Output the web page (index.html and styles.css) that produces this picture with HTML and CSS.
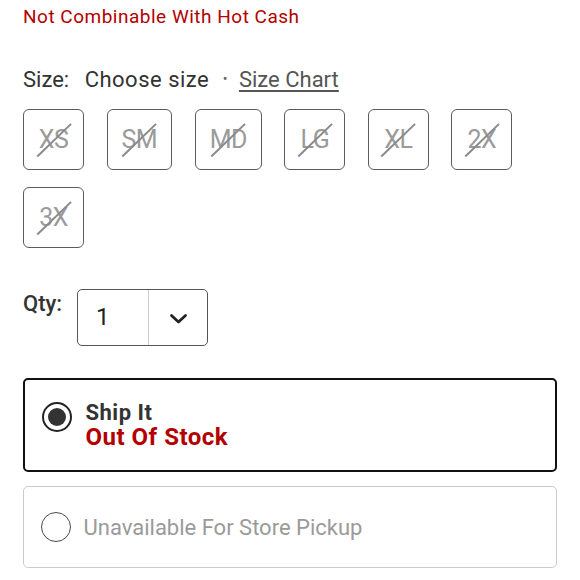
FILE: index.html
```html
<!DOCTYPE html>
<html lang="en">
<head>
  <meta charset="UTF-8">
  <meta name="viewport" content="width=device-width, initial-scale=1.0">
  <title>Product Options</title>
  <link rel="stylesheet" href="styles.css">
</head>
<body>
  <div class="page">
    <p class="promo-note">Not Combinable With Hot Cash</p>

    <div class="size-header">
      <span class="label">Size:</span>
      <span class="size-value">Choose size</span>
      <span class="dot">&bull;</span>
      <a class="size-chart" href="#">Size Chart</a>
    </div>

    <div class="size-grid">
      <button class="size-btn">XS</button>
      <button class="size-btn">SM</button>
      <button class="size-btn">MD</button>
      <button class="size-btn">LG</button>
      <button class="size-btn">XL</button>
      <button class="size-btn">2X</button>
      <button class="size-btn">3X</button>
    </div>

    <div class="qty-row">
      <span class="qty-label">Qty:</span>
      <div class="qty-select">
        <span class="qty-value">1</span>
        <span class="qty-arrow">
          <svg width="19" height="12" viewBox="0 0 19 12"><path d="M2.5 2.5 L9.5 9 L16.5 2.5" fill="none" stroke="#222" stroke-width="2.8" stroke-linecap="round" stroke-linejoin="round"/></svg>
        </span>
      </div>
    </div>

    <div class="fulfill-card selected">
      <span class="radio checked"></span>
      <div class="fulfill-text">
        <div class="fulfill-title">Ship It</div>
        <div class="fulfill-status">Out Of Stock</div>
      </div>
    </div>

    <div class="fulfill-card disabled">
      <span class="radio"></span>
      <div class="fulfill-text">
        <div class="fulfill-muted">Unavailable For Store Pickup</div>
      </div>
    </div>
  </div>
</body>
</html>
```

FILE: styles.css
```css
body {
  margin: 0;
  background: #ffffff;
  font-family: Roboto, "Liberation Sans", Arial, sans-serif;
  color: #333333;
}

.page {
  padding: 4px 23px 0 23px;
  width: 534px;
}

.promo-note {
  margin: 0;
  font-size: 19px;
  line-height: 26px;
  letter-spacing: 0.5px;
  color: #b30000;
}

.size-header {
  margin-top: 35px;
  font-size: 22px;
  line-height: 28px;
  color: #333333;
}

.size-header .label {
  margin-right: 10px;
}

.size-value {
  letter-spacing: 0.5px;
}

.size-header .dot {
  font-size: 14px;
  color: #666666;
  margin: 0 6px 0 8px;
  vertical-align: 3px;
}

.size-chart {
  color: #555555;
  text-decoration: underline;
  text-underline-offset: 3px;
}

.size-grid {
  display: flex;
  flex-wrap: wrap;
  column-gap: 22.5px;
  row-gap: 17px;
  margin-top: 15px;
}

.size-btn {
  position: relative;
  box-sizing: border-box;
  min-width: 61px;
  height: 61px;
  padding: 0 14px;
  border: 1.5px solid #5c5c5c;
  border-radius: 6px;
  background: #ffffff;
  font-family: Roboto, "Liberation Sans", Arial, sans-serif;
  font-size: 25px;
  color: #9a9a9a;
  letter-spacing: -0.5px;
}

.size-btn::after {
  content: "";
  position: absolute;
  left: 50%;
  top: 50%;
  width: 47px;
  height: 1.5px;
  background: #8a8a8a;
  transform: translate(-50%, -50%) rotate(-44deg);
}

.qty-row {
  display: flex;
  align-items: flex-start;
  margin-top: 41px;
}

.qty-label {
  font-size: 22px;
  line-height: 26px;
  font-weight: 500;
  color: #333333;
  margin-top: 2px;
  margin-right: 15px;
}

.qty-select {
  display: flex;
  box-sizing: border-box;
  width: 131px;
  height: 57px;
  border: 1.5px solid #555555;
  border-radius: 5px;
}

.qty-value {
  width: 71px;
  border-right: 1.5px solid #cccccc;
  font-size: 24px;
  line-height: 54px;
  padding-left: 18px;
  box-sizing: border-box;
  color: #222222;
}

.qty-arrow {
  flex: 1;
  display: flex;
  align-items: center;
  justify-content: center;
  padding-top: 2px;
}

.fulfill-card {
  display: flex;
  box-sizing: border-box;
  border-radius: 5px;
}

.fulfill-card.selected {
  align-items: flex-start;
  margin-top: 32px;
  height: 94px;
  border: 2.5px solid #111111;
  padding: 22px 0 0 16.5px;
}

.fulfill-card.disabled {
  align-items: center;
  margin-top: 14px;
  height: 82px;
  border: 1.5px solid #cccccc;
  padding-left: 16.5px;
}

.radio {
  box-sizing: border-box;
  width: 30px;
  height: 30px;
  border-radius: 50%;
  border: 1.5px solid #4a4a4a;
  flex-shrink: 0;
  display: flex;
  align-items: center;
  justify-content: center;
}

.radio.checked {
  border: 2px solid #222222;
}

.radio.checked::after {
  content: "";
  width: 18px;
  height: 18px;
  border-radius: 50%;
  background: #333333;
}

.fulfill-text {
  margin-left: 14px;
}

.selected .fulfill-text {
  margin-top: -1px;
}

.fulfill-title {
  font-size: 22px;
  font-weight: 700;
  color: #333333;
  line-height: 24px;
  letter-spacing: 0.5px;
}

.fulfill-status {
  font-size: 24px;
  font-weight: 700;
  color: #b30000;
  line-height: 24px;
  letter-spacing: 0.5px;
}

.disabled .fulfill-text {
  margin-left: 13px;
}

.fulfill-muted {
  font-size: 22px;
  color: #9a9a9a;
}
```
